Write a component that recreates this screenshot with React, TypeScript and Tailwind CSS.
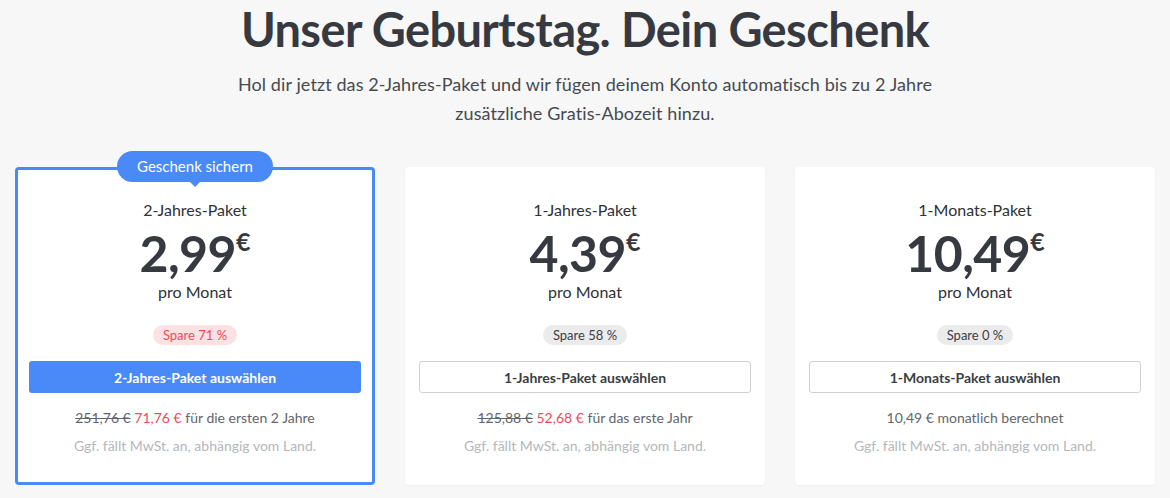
import React from 'react';

type Plan = {
  name: string;
  price: string;
  save: string;
  highlight?: boolean;
  oldPrice?: string;
  newPrice?: string;
  note: string;
};

const plans: Plan[] = [
  {
    name: '2-Jahres-Paket',
    price: '2,99',
    save: 'Spare 71 %',
    highlight: true,
    oldPrice: '251,76 €',
    newPrice: '71,76 €',
    note: 'für die ersten 2 Jahre',
  },
  {
    name: '1-Jahres-Paket',
    price: '4,39',
    save: 'Spare 58 %',
    oldPrice: '125,88 €',
    newPrice: '52,68 €',
    note: 'für das erste Jahr',
  },
  {
    name: '1-Monats-Paket',
    price: '10,49',
    save: 'Spare 0 %',
    note: '10,49 € monatlich berechnet',
  },
];

const PlanCard = ({ plan }: { plan: Plan }) => (
  <div
    className={
      plan.highlight
        ? 'relative flex flex-col items-center bg-white rounded-[4px] border-[3px] border-[#4a89f8] px-[11px] pt-[28px] h-[318px]'
        : 'relative flex flex-col items-center bg-white rounded-[4px] border-[3px] border-white px-[11px] pt-[28px] h-[318px] shadow-[0_1px_3px_rgba(0,0,0,0.04)]'
    }
  >
    {plan.highlight && (
      <div className="absolute -top-[19px] left-1/2 -translate-x-1/2">
        <div className="relative bg-[#4a89f8] text-white text-[15px] leading-[31px] h-[31px] px-[20px] rounded-full whitespace-nowrap">
          Geschenk sichern
          <span className="absolute left-1/2 -translate-x-1/2 top-[30px] w-0 h-0 border-l-[6px] border-r-[6px] border-t-[6px] border-l-transparent border-r-transparent border-t-[#4a89f8]" />
        </div>
      </div>
    )}
    <div className="text-[16px] leading-[24px] text-[#2f3237]">{plan.name}</div>
    <div className="flex items-start mt-[4px] text-[#363a40]">
      <span className="text-[50px] leading-[54px] font-bold tracking-[-0.5px]">{plan.price}</span>
      <span className="text-[25px] leading-[25px] font-bold mt-[3px]">€</span>
    </div>
    <div className="text-[16px] leading-[24px] text-[#2f3237]">pro Monat</div>
    <div
      className={
        plan.highlight
          ? 'mt-[21px] h-[20px] px-[10px] rounded-full bg-[#fde1e3] text-[#f2495c] text-[13px] leading-[20px]'
          : 'mt-[21px] h-[20px] px-[10px] rounded-full bg-[#ebebeb] text-[#3b3e43] text-[13px] leading-[20px]'
      }
    >
      {plan.save}
    </div>
    <button
      className={
        plan.highlight
          ? 'mt-[16px] w-full h-[32px] rounded-[3px] bg-[#4a89f8] text-white text-[14px] font-bold'
          : 'mt-[16px] w-full h-[32px] rounded-[3px] border border-[#cfd1d4] bg-white text-[#3b3e43] text-[14px] font-bold'
      }
    >
      {plan.name} auswählen
    </button>
    <div className="mt-[15px] text-[14px] leading-[20px] text-[#62666c]">
      {plan.oldPrice && <span className="line-through">{plan.oldPrice}</span>}
      {plan.newPrice && <span className="text-[#f2495c]"> {plan.newPrice}</span>}
      {plan.oldPrice ? ' ' : ''}
      {plan.note}
    </div>
    <div className="mt-[8px] text-[14px] leading-[20px] text-[#b4b7bb]">
      Ggf. fällt MwSt. an, abhängig vom Land.
    </div>
  </div>
);

export default function App() {
  return (
    <div className="min-h-[498px] bg-[#f7f7f7] font-['Lato',sans-serif] overflow-hidden">
      <div className="w-[1140px] mx-auto pt-[2px]">
        <h1 className="text-center text-[47px] leading-[54px] font-bold tracking-[-0.6px] text-[#363a40]">
          Unser Geburtstag. Dein Geschenk
        </h1>
        <p className="mx-auto mt-[14px] w-[740px] text-center text-[18px] leading-[29px] tracking-[0.1px] text-[#464a50]">
          Hol dir jetzt das 2-Jahres-Paket und wir fügen deinem Konto automatisch bis zu 2 Jahre zusätzliche Gratis-Abozeit hinzu.
        </p>
        <div className="grid grid-cols-3 gap-[30px] mt-[39px]">
          {plans.map((p) => (
            <PlanCard key={p.name} plan={p} />
          ))}
        </div>
      </div>
    </div>
  );
}
